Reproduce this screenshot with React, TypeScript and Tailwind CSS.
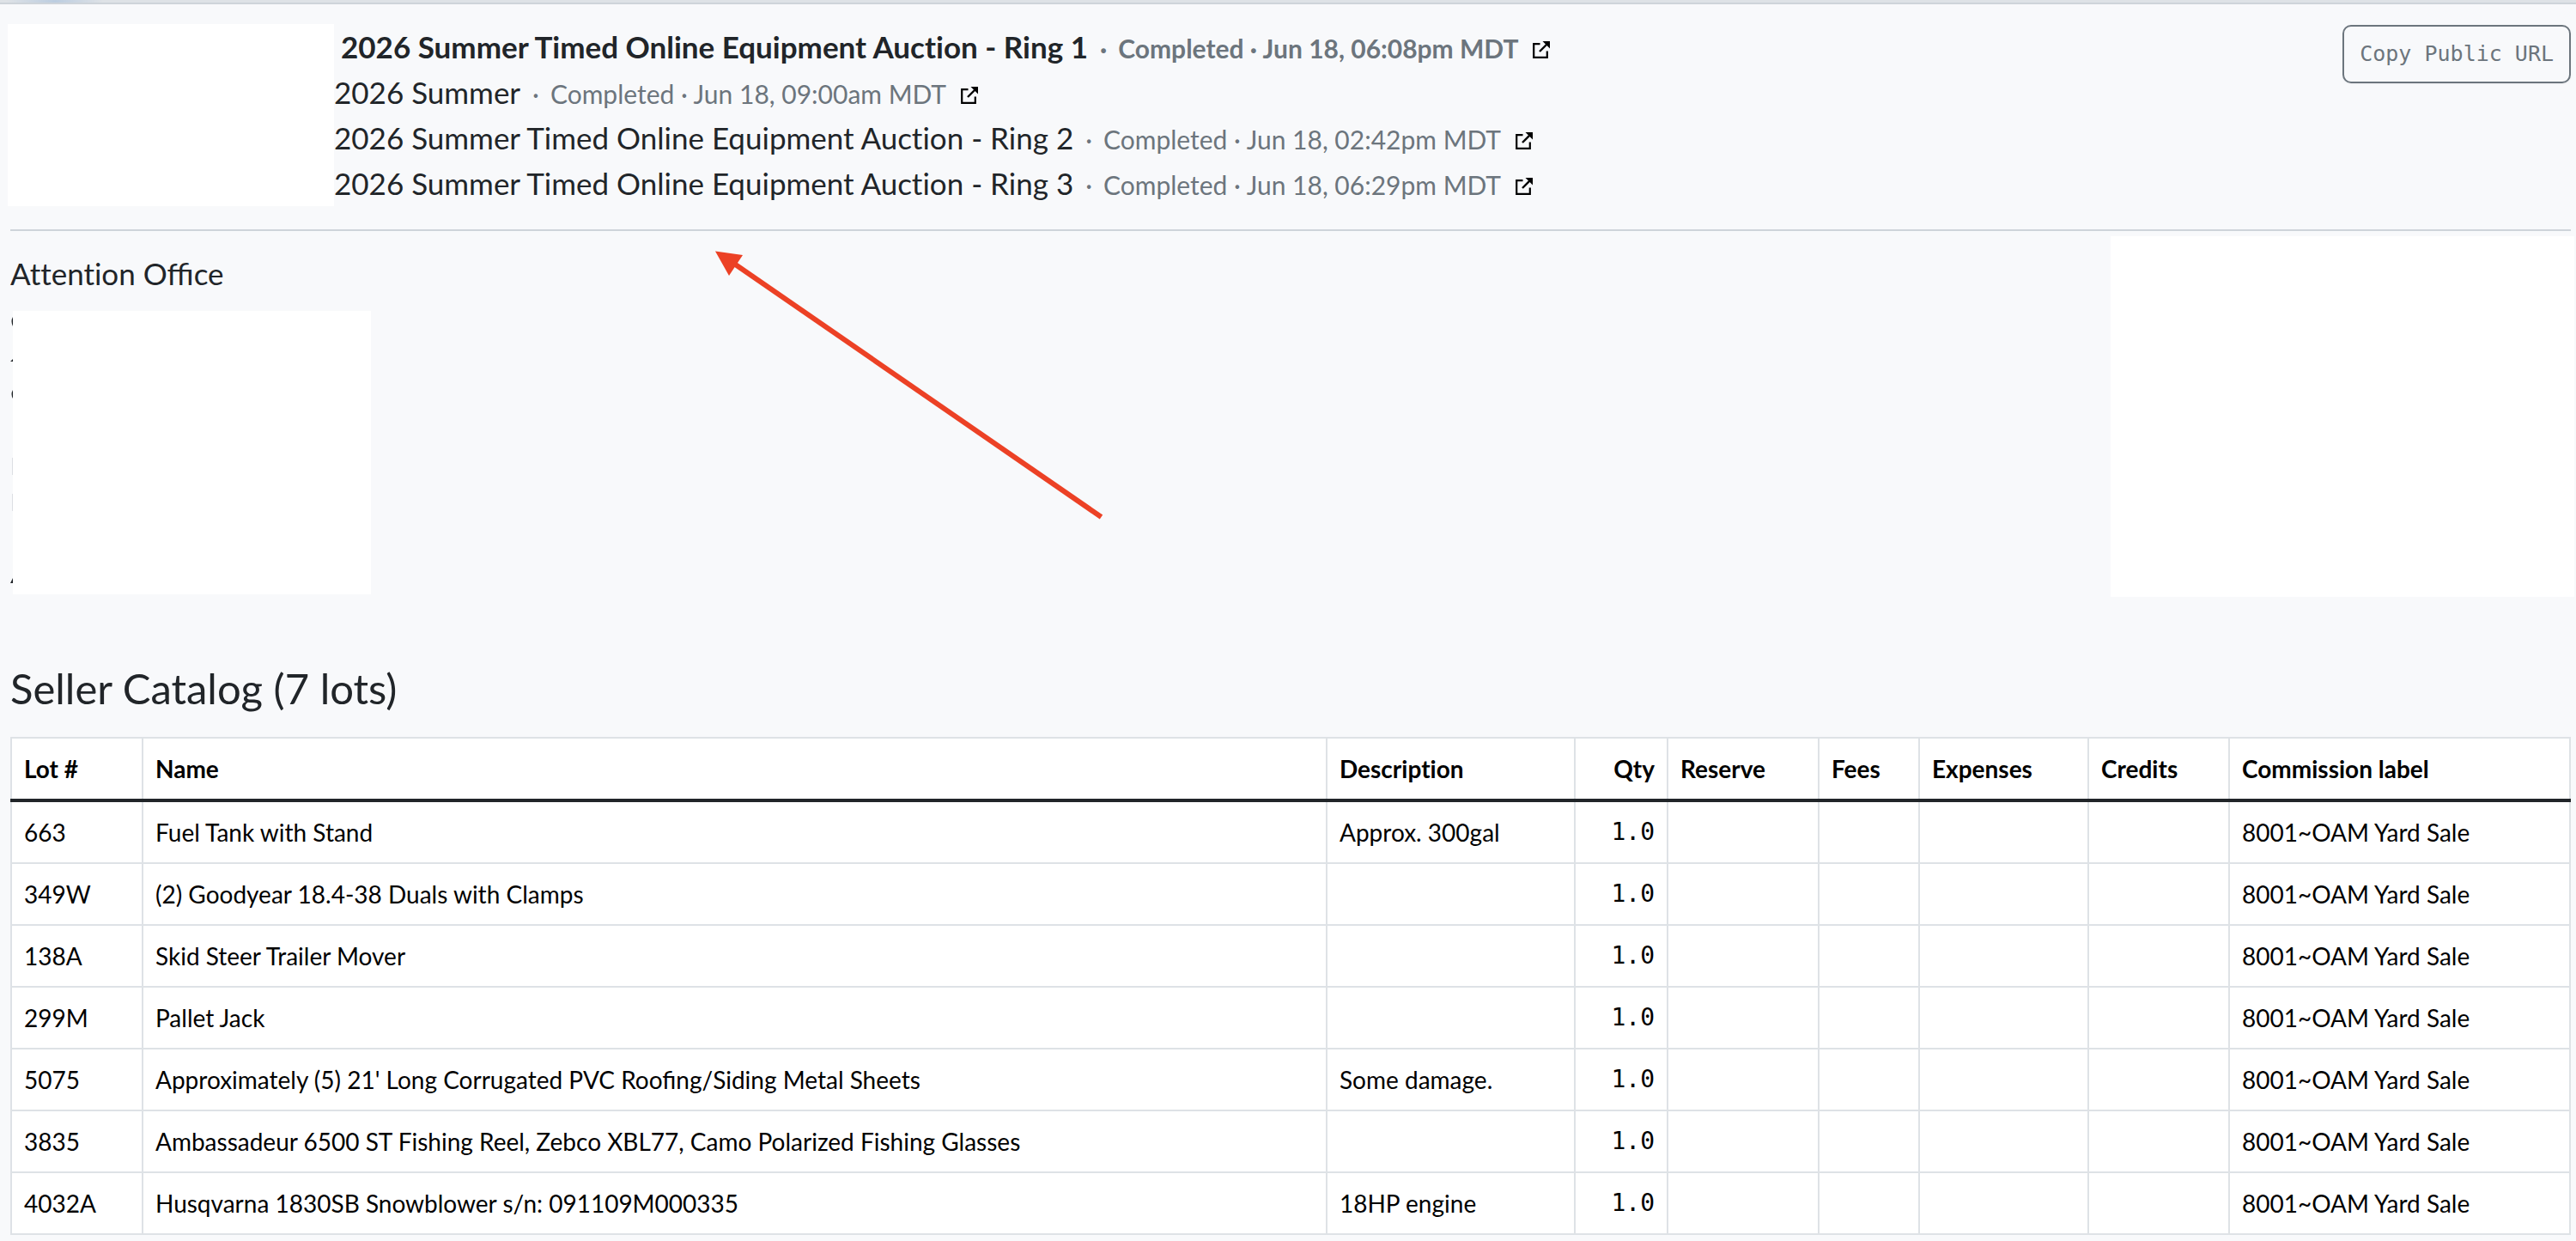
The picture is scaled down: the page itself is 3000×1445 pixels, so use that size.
import React, { useState } from "react";

const auctions = [
    { name: "2026 Summer Timed Online Equipment Auction - Ring 1", status: "Completed · Jun 18, 06:08pm MDT", current: true },
    { name: "2026 Summer", status: "Completed · Jun 18, 09:00am MDT", current: false },
    { name: "2026 Summer Timed Online Equipment Auction - Ring 2", status: "Completed · Jun 18, 02:42pm MDT", current: false },
    { name: "2026 Summer Timed Online Equipment Auction - Ring 3", status: "Completed · Jun 18, 06:29pm MDT", current: false },
];

const columns = [
    { label: "Lot #", width: "w-[153px]" },
    { label: "Name", width: "" },
    { label: "Description", width: "w-[289px]" },
    { label: "Qty", width: "w-[108px]" },
    { label: "Reserve", width: "w-[176px]" },
    { label: "Fees", width: "w-[117px]" },
    { label: "Expenses", width: "w-[197px]" },
    { label: "Credits", width: "w-[164px]" },
    { label: "Commission label", width: "w-[397px]" },
];

const lots = [
    { lot: "663", name: "Fuel Tank with Stand", description: "Approx. 300gal" },
    { lot: "349W", name: "(2) Goodyear 18.4-38 Duals with Clamps", description: "" },
    { lot: "138A", name: "Skid Steer Trailer Mover", description: "" },
    { lot: "299M", name: "Pallet Jack", description: "" },
    { lot: "5075", name: "Approximately (5) 21' Long Corrugated PVC Roofing/Siding Metal Sheets", description: "Some damage." },
    { lot: "3835", name: "Ambassadeur 6500 ST Fishing Reel, Zebco XBL77, Camo Polarized Fishing Glasses", description: "" },
    { lot: "4032A", name: "Husqvarna 1830SB Snowblower s/n: 091109M000335", description: "18HP engine" },
];

const cell = "border-2 border-[#dee2e6] p-[14px]";

function ExternalLinkIcon() {
    return (
        <svg viewBox="0 0 20 20" className="block w-5 h-5" fill="none" stroke="#000" aria-hidden="true">
            <path d="M8.500 3.200H1.200V18.800H16.800V11.500" strokeWidth="2.2" />
            <path d="M17 3L8 12" strokeWidth="2.4" />
            <path d="M11.500 0H20V8.500L17.500 6L14 2.500Z" fill="#000" stroke="none" />
        </svg>
    );
}

function Arrow() {
    return (
        <svg viewBox="0 0 452 314" className="absolute left-[833px] top-[292px] w-[452px] h-[314px] pointer-events-none" aria-hidden="true">
            <path d="M22 15L449.500 310" stroke="#ec4125" strokeWidth="6" />
            <path d="M0 0.500L32 5L16 29Z" fill="#ec4125" />
        </svg>
    );
}

export default function App() {
    const [copied, setCopied] = useState(false);

    const handleCopy = () => {
        navigator.clipboard?.writeText(window.location.href);
        setCopied(true);
    };

    return (
        <div className="relative min-h-screen bg-[#f8f9fb] text-[#212529] font-['Lato',sans-serif] text-[28px] leading-[42px]">
            <div className="h-[5px] bg-[#dee2e6] border-b-2 border-[#ced4da]">
                <div className="ml-2 w-28 h-full bg-linear-to-r from-transparent via-[#bccde0] to-transparent" />
            </div>

            <div className="pl-3 pr-[6px]">
                <header className="flex items-start border-b-2 border-[#ced4da] pt-[23px] pb-[27px]">
                    <div className="-ml-[3px] w-[380px] h-[212px] bg-white shrink-0" />
                    <ul className="grow text-[35px] leading-[53px] [font-variant-ligatures:none]">
                        {auctions.map(a => (
                            <li key={a.name} className={`flex items-baseline h-[53px] whitespace-nowrap ${a.current ? "font-bold pl-2" : ""}`}>
                                <span>{a.name}</span>
                                <span className="text-[30px] text-[#6c757d] ml-[14px]">·</span>
                                <span className="text-[30px] text-[#6c757d] ml-[13px]">{a.status}</span>
                                <a href="#" className="ml-[17px]" aria-label={"Open " + a.name}><ExternalLinkIcon /></a>
                            </li>
                        ))}
                    </ul>
                    <button
                        onClick={handleCopy}
                        data-copied={copied}
                        className="h-[68px] px-[18px] mt-[1px] border-2 border-[#6c757d] rounded-[10px] text-[#6c757d] text-[25px] font-['DejaVu_Sans_Mono',monospace] shadow-xs shrink-0"
                    >
                        Copy Public URL
                    </button>
                </header>

                <section className="flex justify-between items-start">
                    <div>
                        <h2 className="text-[35px] leading-[42px] pt-7">
                            <span className="[font-variant-ligatures:none]">Attention</span> Office
                        </h2>
                        <div className="flex mt-[23px]">
                            <svg viewBox="0 0 3 330" className="w-[3px] h-[330px]" aria-hidden="true">
                                <path d="M3 7Q0 12 3 18ZM0 59L3 56V59ZM3 92Q0 97 3 102ZM0 317L3 311V317Z" fill="#212529" />
                                <path d="M2 171H3V191H2ZM2 213H3V233H2Z" fill="#dcdfe3" />
                            </svg>
                            <div className="w-[417px] h-[330px] bg-white" />
                        </div>
                    </div>
                    <div className="w-[540px] h-[420px] mt-[6px] -mr-1 bg-white" />
                </section>

                <h3 className="text-[49px] leading-[59px] mt-[77px] mb-[27px]">Seller Catalog (7 lots)</h3>

                <table className="w-full bg-white text-black text-left border-collapse">
                    <thead className="[font-variant-ligatures:none]">
                        <tr>
                            {columns.map(c => (
                                <th key={c.label} className={`border-2 border-b-4 border-[#dee2e6] border-b-[#212529] p-[14px] font-bold ${c.width} ${c.label === "Qty" ? "text-right" : ""}`}>
                                    {c.label}
                                </th>
                            ))}
                        </tr>
                    </thead>
                    <tbody>
                        {lots.map(l => (
                            <tr key={l.lot}>
                                <td className={cell}>{l.lot}</td>
                                <td className={cell}>{l.name}</td>
                                <td className={cell}>{l.description}</td>
                                <td className={`${cell} text-right align-top font-['DejaVu_Sans_Mono',monospace]`}>1.0</td>
                                <td className={cell}></td>
                                <td className={cell}></td>
                                <td className={cell}></td>
                                <td className={cell}></td>
                                <td className={cell}>8001~OAM Yard Sale</td>
                            </tr>
                        ))}
                    </tbody>
                </table>
            </div>

            <Arrow />
        </div>
    );
}
